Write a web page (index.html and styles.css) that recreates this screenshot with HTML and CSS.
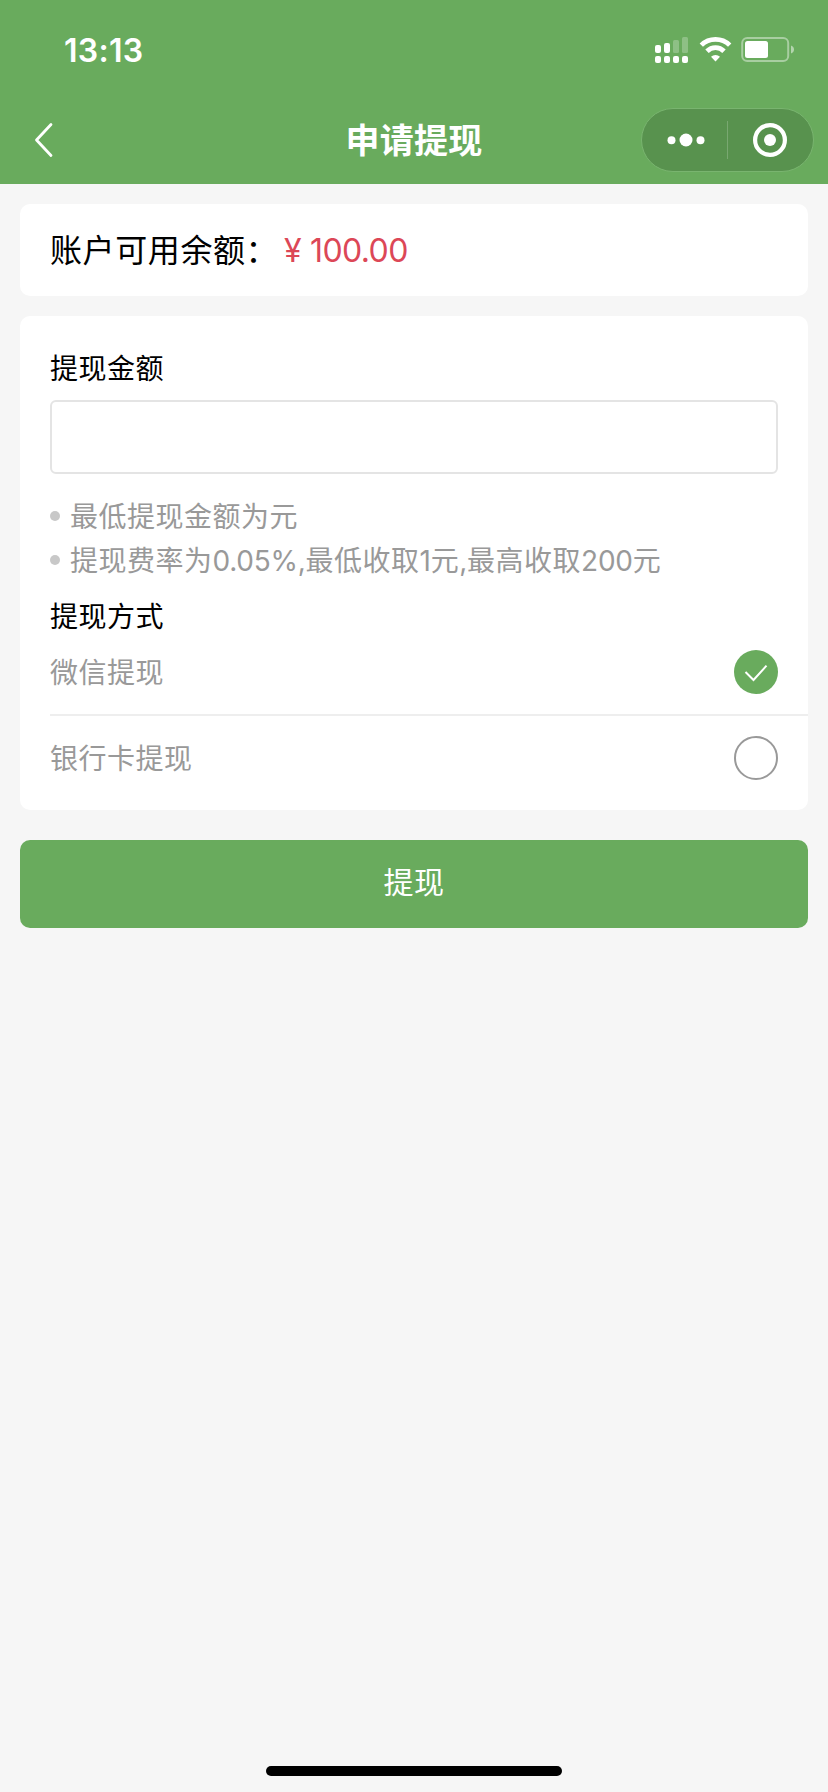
FILE: index.html
```html
<!DOCTYPE html>
<html lang="zh-CN">
<head>
<meta charset="utf-8">
<title>申请提现</title>
<link rel="stylesheet" href="styles.css">
</head>
<body>
<header class="header">
  <div class="status">
    <span class="clock">13:13</span>
    <svg class="status-icons" width="144" height="32" viewBox="0 0 144 32" fill="#fff">
      <rect x="5" y="12" width="6" height="8" rx="2"/>
      <rect x="14" y="10" width="6" height="10" rx="2"/>
      <rect x="23" y="7" width="6" height="13" rx="1.500" opacity=".25"/>
      <rect x="32" y="4" width="6" height="16" rx="1.500" opacity=".25"/>
      <rect x="5" y="23" width="6" height="7" rx="2"/>
      <rect x="14" y="23" width="6" height="7" rx="2"/>
      <rect x="23" y="23" width="6" height="7" rx="2"/>
      <rect x="32" y="23" width="6" height="7" rx="2"/>
      <g fill="none" stroke="#fff" stroke-width="4.800">
        <path d="M51.300 12.100a20.400 20.400 0 0 1 28.400 0"/>
        <path d="M57 18.200a12 12 0 0 1 17 0"/>
      </g>
      <path d="M65.500 28.400l-4.500-4.600a6.400 6.400 0 0 1 9 0z"/>
      <rect x="92.200" y="5" width="46" height="23" rx="5" fill="none" stroke="#fff" stroke-width="2" opacity=".42"/>
      <rect x="95" y="8" width="23" height="17" rx="2.500"/>
      <path d="M141 12.500v8q3-1.200 3-4t-3-4z" opacity=".5"/>
    </svg>
  </div>
  <nav class="nav">
    <svg class="back" width="20" height="36" viewBox="0 0 20 36"><path d="M17 2.500L2.500 18 17 33.500" fill="none" stroke="#fff" stroke-width="2.800" stroke-linecap="round" stroke-linejoin="round"/></svg>
    <h1 class="title">申请提现</h1>
    <div class="capsule">
      <svg class="more" width="38" height="14" viewBox="0 0 38 14" fill="#fff"><circle cx="4.500" cy="7.300" r="4"/><circle cx="19" cy="7" r="6.500"/><circle cx="33.500" cy="7.300" r="4"/></svg>
      <span class="divider"></span>
      <svg class="target" width="34" height="34" viewBox="0 0 34 34"><circle cx="17" cy="17" r="14.900" fill="none" stroke="#fff" stroke-width="4.200"/><circle cx="17" cy="17" r="6" fill="#fff"/></svg>
    </div>
  </nav>
</header>
<main class="page">
  <section class="card balance"><span class="balance-label">账户可用余额：</span><span class="balance-value"><span class="currency">¥</span>100.00</span></section>
  <section class="card form">
    <label class="label" for="amount">提现金额</label>
    <input class="amount" id="amount" type="text">
    <ul class="tips">
      <li class="tip"><span>最低提现金额为元</span></li>
      <li class="tip"><span>提现费率为<span class="num">0.05%,</span>最低收取<span class="num">1</span>元<span class="num">,</span>最高收取<span class="num">200</span>元</span></li>
    </ul>
    <h2 class="label">提现方式</h2>
    <div class="option option-first">
      <span>微信提现</span>
      <svg width="44" height="44" viewBox="0 0 44 44"><circle cx="22" cy="22" r="22" fill="#69ab5d"/><path d="M11.500 22l8 8L32.500 15.700" fill="none" stroke="#fff" stroke-width="2"/></svg>
    </div>
    <div class="option">
      <span>银行卡提现</span>
      <svg width="44" height="44" viewBox="0 0 44 44"><circle cx="22" cy="22" r="21" fill="#fff" stroke="#999" stroke-width="2"/></svg>
    </div>
  </section>
  <button class="submit" type="button">提现</button>
</main>
<div class="home"></div>
</body>
</html>
```
FILE: styles.css
```css
* { box-sizing: border-box; }
body {
  margin: 0;
  height: 1792px;
  display: flex;
  flex-direction: column;
  background: #f6f6f6;
  color: #000;
  font-family: Inter, "Noto Sans CJK SC", sans-serif;
  font-size: 28px;
}
svg { display: block; flex: none; }
.header { height: 184px; background: #69ab5d; color: #fff; }
.status {
  height: 96px;
  padding: 33px 34px 0 64px;
  display: flex;
  justify-content: space-between;
  align-items: flex-start;
}
.clock { font-size: 32px; line-height: 36px; font-weight: 600; letter-spacing: .3px; }
.nav {
  height: 88px;
  padding: 0 14px 0 34px;
  display: grid;
  grid-template-columns: 173px 1fr 173px;
  align-items: center;
}
.title {
  margin: 0 10px 0 -10px;
  padding-top: 1px;
  text-align: center;
  font-size: 34px;
  line-height: 44px;
  font-weight: 700;
  letter-spacing: .3px;
}
.capsule {
  width: 173px;
  height: 64px;
  padding: 0 26px 0 25px;
  display: flex;
  align-items: center;
  justify-content: space-between;
  border: 1px solid #79b46f;
  border-radius: 32px;
  background: #58924e;
}
.divider { width: 1px; height: 38px; margin: 0 6px 0 2px; background: #79a871; }
.page { flex: 1; padding: 20px; }
.card { margin-bottom: 20px; background: #fff; border-radius: 10px; }
.balance {
  height: 92px;
  padding: 2px 0 0 30px;
  display: flex;
  align-items: center;
  font-size: 32px;
  line-height: 44px;
}
.balance-label { width: 234px; letter-spacing: .6px; white-space: nowrap; }
.balance-value { color: #dc4757; letter-spacing: -.6px; }
.currency { margin-right: 9px; }
.form { padding: 31px 0 30px 30px; margin-bottom: 30px; }
.label {
  display: block;
  margin: 0;
  font-size: 28px;
  line-height: 44px;
  font-weight: 400;
  letter-spacing: .5px;
}
.amount {
  display: block;
  width: 728px;
  height: 74px;
  margin: 9px 0 20px;
  padding: 0 20px;
  border: 2px solid #e4e4e4;
  border-radius: 6px;
  background: #fff;
  font: inherit;
}
.tips { margin: 0 0 13px; padding: 0; list-style: none; }
.tip {
  display: flex;
  align-items: center;
  gap: 10px;
  height: 44px;
  line-height: 42px;
  color: #999;
  letter-spacing: .5px;
}
.tip::before { content: ""; width: 10px; height: 10px; border-radius: 50%; background: #c8c8c8; }
.tip span { padding-top: 2px; }
.num { letter-spacing: -.25px; }
.option {
  display: flex;
  align-items: center;
  justify-content: space-between;
  height: 64px;
  padding: 20px 30px 0 0;
  line-height: 42px;
  color: #999;
  letter-spacing: .5px;
}
.option span { padding-top: 2px; }
.option-first { height: 77px; padding: 11px 30px 20px 0; border-bottom: 2px solid #eee; }
.submit {
  display: block;
  width: 100%;
  height: 88px;
  padding: 0 0 3px;
  border: 0;
  border-radius: 10px;
  background: #69ab5d;
  color: #fff;
  font: inherit;
  font-size: 30px;
  line-height: 85px;
  letter-spacing: .6px;
}
.home { width: 296px; height: 10px; margin: 0 auto 16px; border-radius: 5px; background: #000; }
```
